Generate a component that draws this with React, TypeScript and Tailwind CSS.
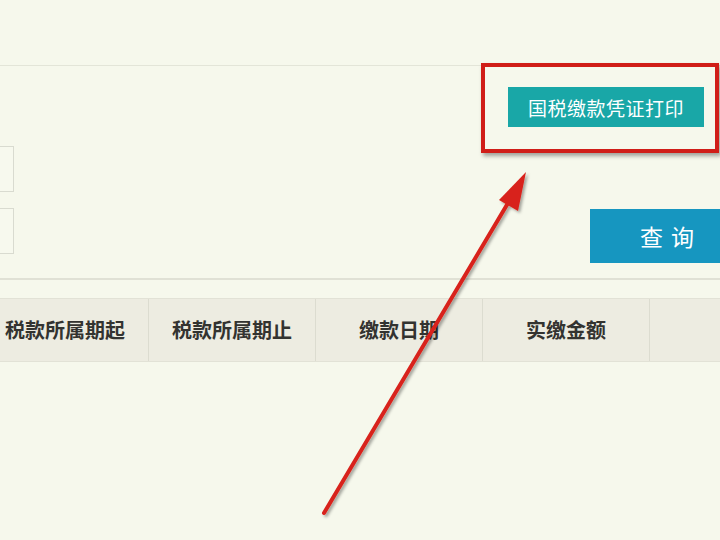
import React from 'react';

const headers = ['税款所属期起', '税款所属期止', '缴款日期', '实缴金额', ''];

export default function App() {
    return (
        <div
            className="relative w-[720px] h-[540px] overflow-hidden bg-[#f6f8ec]"
            style={{ fontFamily: '"Noto Sans CJK SC", "Noto Sans", sans-serif' }}
        >
            <div className="h-[66px] border-b border-[#e3e5d8]" />

            <div className="flex justify-end pr-[16px] pt-[21px]">
                <button className="w-[196px] h-[40px] bg-[#19a7a7] text-white text-[19px] leading-none tracking-[0.5px]">
                    国税缴款凭证打印
                </button>
            </div>

            <div className="flex items-start justify-between pt-[19px] pb-[15px] border-b-2 border-[#e0e1d5]">
                <div className="flex flex-col gap-[16px] -ml-[200px]">
                    <div className="w-[214px] h-[46px] border border-[#d9dbd0] bg-[#f7f9ee]" />
                    <div className="w-[214px] h-[46px] border border-[#d9dbd0] bg-[#f7f9ee]" />
                </div>
                <button className="mt-[63px] -mr-[24px] shrink-0 w-[154px] h-[54px] bg-[#1696c0] text-white text-[23px] leading-none tracking-[8px] pl-[8px]">
                    查询
                </button>
            </div>

            <div className="mt-[18px] flex h-[64px] bg-[#edece1] border-y border-[#e2e2d6] -ml-[18px]">
                {headers.map((h, i) => (
                    <div
                        key={i}
                        className={`flex items-center justify-center shrink-0 border-r border-[#dcdcd0] text-[20px] font-bold text-[#333330] ${i === 4 ? 'w-[120px] border-r-0' : 'w-[167px]'}`}
                    >
                        {h}
                    </div>
                ))}
            </div>

            {/* annotation overlay */}
            <div className="absolute left-[481px] top-[63px] w-[238px] h-[90px] border-[4px] border-[#d01e18] shadow-[2px_3px_4px_rgba(0,0,0,0.35)]" />
            <svg className="absolute inset-0 pointer-events-none" width="720" height="540" viewBox="0 0 720 540">
                <defs>
                    <filter id="sh" x="-20%" y="-20%" width="140%" height="140%">
                        <feDropShadow dx="2" dy="2" stdDeviation="1.5" floodColor="#000" floodOpacity="0.35" />
                    </filter>
                </defs>
                <g filter="url(#sh)">
                    <line x1="324" y1="513" x2="511" y2="198" stroke="#d8231b" strokeWidth="4" strokeLinecap="round" />
                    <polygon points="526,172 518,211 499,200" fill="#d8231b" />
                </g>
            </svg>
        </div>
    );
}
